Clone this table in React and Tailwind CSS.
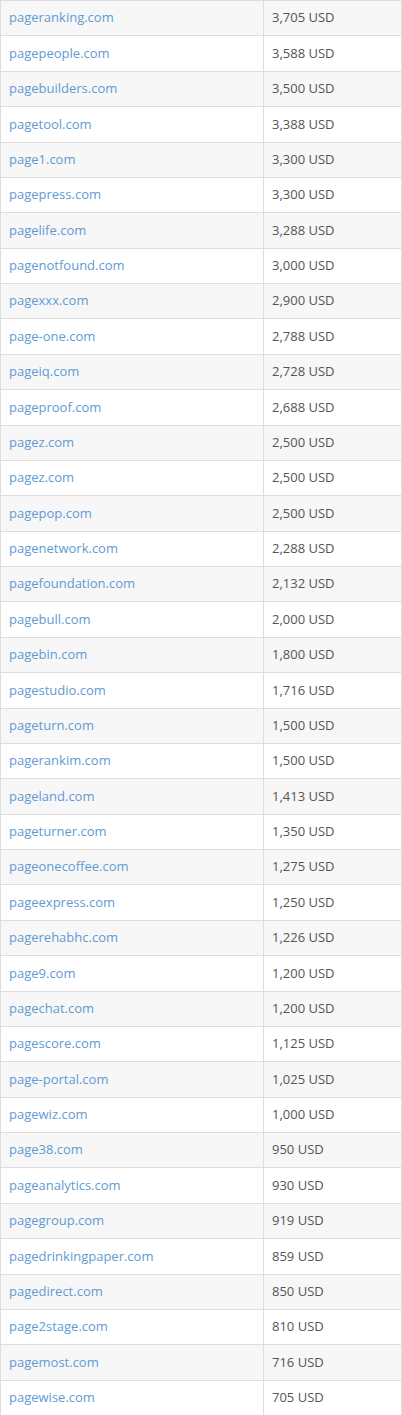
const rows = [
  ["pageranking.com", "3,705 USD"],
  ["pagepeople.com", "3,588 USD"],
  ["pagebuilders.com", "3,500 USD"],
  ["pagetool.com", "3,388 USD"],
  ["page1.com", "3,300 USD"],
  ["pagepress.com", "3,300 USD"],
  ["pagelife.com", "3,288 USD"],
  ["pagenotfound.com", "3,000 USD"],
  ["pagexxx.com", "2,900 USD"],
  ["page-one.com", "2,788 USD"],
  ["pageiq.com", "2,728 USD"],
  ["pageproof.com", "2,688 USD"],
  ["pagez.com", "2,500 USD"],
  ["pagez.com", "2,500 USD"],
  ["pagepop.com", "2,500 USD"],
  ["pagenetwork.com", "2,288 USD"],
  ["pagefoundation.com", "2,132 USD"],
  ["pagebull.com", "2,000 USD"],
  ["pagebin.com", "1,800 USD"],
  ["pagestudio.com", "1,716 USD"],
  ["pageturn.com", "1,500 USD"],
  ["pagerankim.com", "1,500 USD"],
  ["pageland.com", "1,413 USD"],
  ["pageturner.com", "1,350 USD"],
  ["pageonecoffee.com", "1,275 USD"],
  ["pageexpress.com", "1,250 USD"],
  ["pagerehabhc.com", "1,226 USD"],
  ["page9.com", "1,200 USD"],
  ["pagechat.com", "1,200 USD"],
  ["pagescore.com", "1,125 USD"],
  ["page-portal.com", "1,025 USD"],
  ["pagewiz.com", "1,000 USD"],
  ["page38.com", "950 USD"],
  ["pageanalytics.com", "930 USD"],
  ["pagegroup.com", "919 USD"],
  ["pagedrinkingpaper.com", "859 USD"],
  ["pagedirect.com", "850 USD"],
  ["page2stage.com", "810 USD"],
  ["pagemost.com", "716 USD"],
  ["pagewise.com", "705 USD"],
]

export default function App() {
  return (
    <div className="w-[402px] bg-white font-['Open_Sans',sans-serif] text-[13px]">
      <div className="border-l border-r border-[#dddddd]">
        {rows.map(([domain, price], i) => (
          <div
            key={i}
            className={`grid grid-cols-[263px_1fr] h-[35.38px] border-t border-[#dddddd] ${
              i % 2 === 0 ? "bg-[#f7f7f7]" : "bg-white"
            }`}
          >
            <div className="flex items-center pl-[8px] border-r border-[#dddddd]">
              <a href="#" className="text-[#5f9bd3]">{domain}</a>
            </div>
            <div className="flex items-center pl-[8px] text-[#555555]">
              {price}
            </div>
          </div>
        ))}
      </div>
    </div>
  )
}
